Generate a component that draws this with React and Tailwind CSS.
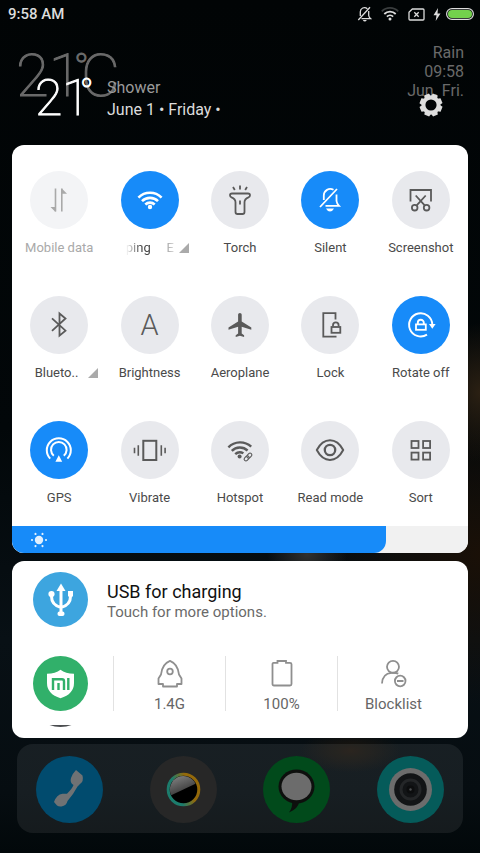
import { useState } from 'react'
import { clsx } from 'clsx'

const line = { fill: 'none', stroke: 'currentColor', strokeWidth: 2 }

const glyphs = {
  data: (
    <g>
      <path {...line} strokeWidth="1.6" d="M25.5 17.5v23M31.8 40.5v-23" />
      <path fill="currentColor" d="M20.5 36h5v5zM31.8 17.5l5.2 5.2h-5.2z" />
    </g>
  ),
  wifi: (
    <g>
      <path {...line} strokeWidth="2.6" d="M17.4 26.6a16.4 16.4 0 0 1 23.2 0M21 30.2a11.3 11.3 0 0 1 16 0M24.3 33.5a6.8 6.8 0 0 1 9.4 0" />
      <circle fill="currentColor" cx="29" cy="36" r="2.2" />
    </g>
  ),
  torch: (
    <g>
      <path {...line} strokeWidth="1.8" strokeLinejoin="round" d="M21 22.5h16q2 0 2 1.8q0 1.5-1.5 2q-4 1.5-4 5V41q0 2-2 2h-5q-2 0-2-2v-9.7q0-3.5-4-5q-1.5-.5-1.5-2q0-1.8 2-1.8z" />
      <path {...line} strokeWidth="1.8" d="M29 29.5v4M29 14.5v4M22 16l1.800 3M36 16l-1.800 3" />
    </g>
  ),
  silent: (
    <g>
      <path {...line} strokeWidth="1.8" d="M32.5 18.8a6.5 6.5 0 0 0-9.7 5.7v4.5M35.5 23.5v6.5q.3 2.5 2.5 4.8H24.5M19 36l17-18" />
      <path fill="currentColor" d="M25 37.6h8q-1.5 3-4 3t-4-3z" />
    </g>
  ),
  screenshot: (
    <g {...line} strokeWidth="1.8">
      <path d="M18.5 30.5V19H39v11.5M33.7 24.5l-9 9.8M23.7 24.5l9 9.8" />
      <circle cx="22.7" cy="36.7" r="2.8" />
      <circle cx="34.6" cy="36.7" r="2.8" />
    </g>
  ),
  bluetooth: <path {...line} strokeWidth="1.8" d="M22 22.3l13.5 12.4-6 5V17.5l6 5L22 34.9" />,
  plane: (
    <path
      fill="currentColor"
      transform="translate(15.1 14.6) scale(1.2)"
      d="M21 16v-2l-8-5V3.5C13 2.67 12.33 2 11.5 2S10 2.67 10 3.5V9l-8 5v2l8-2.5V19l-2 1.5V22l3.5-1 3.5 1v-1.5L13 19v-5.5z"
    />
  ),
  lock: (
    <g {...line} strokeWidth="1.8">
      <path d="M34.5 23.5v-6.3H22.3v23.5h13.2M32 30.5v-1.3a2.8 2.8 0 0 1 5.6 0v1.3" />
      <rect x="30.5" y="31" width="8.8" height="5.8" />
    </g>
  ),
  rotate: (
    <g>
      <path {...line} strokeWidth="1.9" d="M40.3 28.5A11.6 11.6 0 1 0 35 38.6M25.8 28v-1.3a3 3 0 0 1 6 0V28" />
      <rect {...line} strokeWidth="1.8" x="24" y="28.4" width="9.8" height="5.4" />
      <path fill="currentColor" d="M37 28h6.6l-3.3 4.8z" />
    </g>
  ),
  gps: (
    <g>
      <path {...line} d="M20.2 37.6a12 12 0 1 1 17.2 0M23.8 34.7a7.8 7.8 0 1 1 10 0" />
      <path fill="currentColor" d="M28.8 34.3l3.4 6.5h-6.8z" />
    </g>
  ),
  vibrate: (
    <g {...line}>
      <rect x="22.3" y="19.8" width="13" height="19.2" />
      <path strokeWidth="1.6" d="M17.3 24.3v10.4M13.5 26.8v5.4M40.3 24.3v10.4M44.1 26.8v5.4" />
    </g>
  ),
  hotspot: (
    <g {...line}>
      <path strokeWidth="2.4" d="M17.4 26.3a16.4 16.4 0 0 1 22.8-.6M20.8 29.9a11.3 11.3 0 0 1 15.8-.4M24.2 33.2a6.8 6.8 0 0 1 8.2-.9" />
      <circle fill="currentColor" stroke="none" cx="28.6" cy="35.6" r="2" />
      <g strokeWidth="1.1" transform="rotate(-45 37 36)">
        <rect x="32.3" y="34.2" width="5.6" height="3.6" rx="1.8" />
        <rect x="36.1" y="34.2" width="5.6" height="3.6" rx="1.8" />
      </g>
    </g>
  ),
  eye: (
    <g {...line}>
      <path strokeLinejoin="round" d="M15.8 29Q21 19.3 29 19.3T42.2 29Q37 38.9 29 38.9T15.8 29z" />
      <circle strokeWidth="2.3" cx="29" cy="29" r="5.2" />
    </g>
  ),
  sort: (
    <g {...line} strokeWidth="1.8">
      <rect x="19.5" y="20" width="7" height="7" />
      <rect x="31.1" y="20" width="7" height="7" />
      <rect x="19.5" y="31.6" width="7" height="7" />
      <rect x="31.1" y="31.6" width="7" height="7" />
    </g>
  ),
}

const initialTiles = [
  { id: 'data', label: 'Mobile data', disabled: true },
  { id: 'wifi', label: 'ping', next: 'E', on: true, expandable: true },
  { id: 'torch', label: 'Torch' },
  { id: 'silent', label: 'Silent', on: true },
  { id: 'screenshot', label: 'Screenshot' },
  { id: 'bluetooth', label: 'Blueto..', expandable: true },
  { id: 'brightness', label: 'Brightness' },
  { id: 'plane', label: 'Aeroplane' },
  { id: 'lock', label: 'Lock' },
  { id: 'rotate', label: 'Rotate off', on: true },
  { id: 'gps', label: 'GPS', on: true },
  { id: 'vibrate', label: 'Vibrate' },
  { id: 'hotspot', label: 'Hotspot' },
  { id: 'eye', label: 'Read mode' },
  { id: 'sort', label: 'Sort' },
]

function StatusBar() {
  return (
    <div className="flex h-7 items-center justify-between pr-[6px] pl-2 text-[#dcdcdc]">
      <span className="text-[15px] font-medium">9:58 AM</span>
      <div className="flex items-center">
        <svg className="mr-[9px] h-4 w-[15px]" viewBox="0 0 15 16" fill="none" stroke="currentColor" strokeWidth="1.3">
          <path d="M10.3 2.7A4.2 4.2 0 0 0 3.3 6v4M11.7 5v4.5q.3 1.8 2 3.2H4.5M1.3 14L13 1.3" />
          <path fill="currentColor" stroke="none" d="M5.8 14h4q-.8 1.5-2 1.5t-2-1.5z" />
        </svg>
        <svg className="mr-[9px] h-[14px] w-[18px]" viewBox="0 0 18 14" fill="none" stroke="currentColor" strokeWidth="1.8">
          <path stroke="#3a3d3e" d="M.8 4.3a11.6 11.6 0 0 1 16.4 0" />
          <path d="M3.3 7a8 8 0 0 1 11.4 0M5.9 9.6a4.4 4.4 0 0 1 6.2 0" />
          <circle cx="9" cy="12" r="1.5" fill="currentColor" stroke="none" />
        </svg>
        <svg className="mr-2 h-[13px] w-[17px]" viewBox="0 0 17 13" fill="none" stroke="currentColor" strokeWidth="1.3">
          <path strokeLinejoin="round" d="M4.3 1H15q1 0 1 1v9q0 1-1 1H2q-1 0-1-1V4.3z" />
          <path d="M6.3 4.3l4.4 4.4M10.7 4.3L6.3 8.7" />
        </svg>
        <svg className="mr-[5px] h-[13px] w-2" viewBox="0 0 8 13" fill="currentColor">
          <path d="M5 0L.5 7.3h3L2.7 13 7.5 5.5h-3z" />
        </svg>
        <svg className="h-3 w-7" viewBox="0 0 28 12">
          <rect x=".6" y=".6" width="26.8" height="10.8" rx="5.4" fill="none" stroke="currentColor" strokeWidth="1.2" />
          <rect x="2" y="2" width="24" height="8" rx="4" fill="#73d14c" />
        </svg>
      </div>
    </div>
  )
}

function GearIcon() {
  return (
    <svg className="h-6 w-6" viewBox="-12 -12 24 24">
      <circle r="7.5" fill="none" stroke="#dedede" strokeWidth="3.8" />
      {[22, 67, 112, 157, 202, 247, 292, 337].map((angle) => (
        <path key={angle} fill="#dedede" transform={`rotate(${angle})`} d="M-3.4-8l.8-3.4h5.2l.8 3.4z" />
      ))}
    </svg>
  )
}

function WeatherHeader() {
  return (
    <header className="relative flex h-[117px] items-end pb-6 pl-[35px] text-base leading-[22px]">
      <div className="absolute inset-x-4 top-[15px] flex justify-between text-[#6a6a6a]">
        <p className="flex items-start text-[60px] leading-[66px] font-thin [-webkit-text-stroke:1px]">
          <span>21</span>
          <span className="-ml-2 text-[40px] leading-[52px]">°</span>
          <span className="-ml-2">C</span>
        </p>
        <p className="text-right leading-[19px]">
          Rain
          <br />
          09:58
          <br />
          Jun. Fri.
        </p>
      </div>
      <p className="relative flex w-[72px] items-start text-[50px] leading-[46px] font-thin text-white [-webkit-text-stroke:1px]">
        <span>21</span>
        <span className="-ml-[10px] text-4xl leading-9">°</span>
      </p>
      <div className="relative">
        <p className="text-[#9a9a9a]">Shower</p>
        <p className="text-[#dcdcdc]">June 1 • Friday •</p>
      </div>
      <button type="button" aria-label="Settings" className="relative mr-[37px] mb-1 ml-auto">
        <GearIcon />
      </button>
    </header>
  )
}

function ExpandMark() {
  return (
    <svg className="h-[10px] w-[10px] text-[#aaa]" viewBox="0 0 10 10">
      <path fill="currentColor" d="M10 0v10H0z" />
    </svg>
  )
}

function Tile({ tile, onToggle }) {
  return (
    <button
      type="button"
      aria-pressed={Boolean(tile.on)}
      disabled={tile.disabled}
      onClick={() => onToggle(tile.id)}
      className="flex flex-col items-center gap-[9px]"
    >
      <span
        className={clsx(
          'flex h-[58px] w-[58px] items-center justify-center rounded-full',
          tile.on && 'bg-[#178bf9] text-white',
          tile.disabled && 'bg-[#f3f4f6] text-[#a9a9a9]',
          !tile.on && !tile.disabled && 'bg-[#e8e9ed] text-[#5a5a5a]',
        )}
      >
        {tile.id === 'brightness' ? (
          <span aria-hidden="true" className="text-[29px] leading-none font-light">A</span>
        ) : (
          <svg className="h-[58px] w-[58px]" viewBox="0 0 58 58">{glyphs[tile.id]}</svg>
        )}
      </span>
      <span
        className={clsx(
          'flex w-full items-center text-[13px] leading-5 whitespace-nowrap',
          tile.expandable ? 'justify-end pr-[6px]' : 'justify-center',
          tile.next ? 'gap-[5px]' : 'gap-[10px]',
          tile.disabled ? 'text-[#a9a9a9]' : 'text-[#4a4a4a]',
        )}
      >
        {tile.next ? (
          <span className="flex w-12 justify-between overflow-hidden [mask-image:linear-gradient(to_right,transparent,black_30%,black_60%,transparent_110%)]">
            <span>{tile.label}</span>
            <span>{tile.next}</span>
          </span>
        ) : (
          tile.label
        )}
        {tile.expandable ? <ExpandMark /> : null}
      </span>
    </button>
  )
}

function BrightnessSlider() {
  const [level, setLevel] = useState(82)

  return (
    <div className="relative h-[27px] bg-[#f1f1f1]">
      <div className="flex h-full items-center rounded-br-xl bg-[#178bf9] pl-[18px]" style={{ width: `${level}%` }}>
        <svg className="h-[18px] w-[18px]" viewBox="-9 -9 18 18" fill="#e3f0fd">
          <circle r="4.2" />
          {[0, 60, 120, 180, 240, 300].map((angle) => (
            <circle key={angle} r="1.1" cx="7" transform={`rotate(${angle})`} />
          ))}
        </svg>
      </div>
      <input
        type="range"
        aria-label="Screen brightness"
        value={level}
        onChange={(event) => setLevel(Number(event.target.value))}
        className="absolute inset-0 h-full w-full opacity-0"
      />
    </div>
  )
}

function QuickSettings() {
  const [tiles, setTiles] = useState(initialTiles)

  function handleToggle(id) {
    setTiles(tiles.map((tile) => (tile.id === id ? { ...tile, on: !tile.on } : tile)))
  }

  return (
    <section className="mx-3 overflow-hidden rounded-xl bg-white">
      <div className="grid grid-cols-5 gap-y-[38px] px-[2px] pt-[26px] pb-[18px]">
        {tiles.map((tile) => (
          <Tile key={tile.id} tile={tile} onToggle={handleToggle} />
        ))}
      </div>
      <BrightnessSlider />
    </section>
  )
}

const shortcuts = [
  {
    label: '1.4G',
    icon: (
      <>
        <path d="M6 15.5Q7 5 15 1.8Q23 5 24 15.5l2.5 4V25H22v2.5H8V25H3.5v-5.5z" strokeLinejoin="round" />
        <circle cx="15" cy="12.5" r="2.8" />
      </>
    ),
  },
  {
    label: '100%',
    icon: <path d="M6.5 3.8h4V2h8.5v1.8h4q1.500 0 1.500 1.500V25q0 1.500-1.500 1.500h-16Q5.500 26.500 5.500 25V5.300q0-1.500 1-1.500z" />,
  },
  {
    label: 'Blocklist',
    icon: (
      <>
        <circle cx="14" cy="7.8" r="6" />
        <path d="M3 24.5q.5-10 9.5-10.7q4-.3 6.8.8M18 22h6.5" />
        <circle cx="21.2" cy="22" r="5.3" />
      </>
    ),
  },
]

function Notifications() {
  return (
    <section className="mx-3 mt-2 flex flex-col rounded-xl bg-white pt-[11px] pr-[19px] pb-[11px] pl-[21px]">
      <a href="#usb" className="flex items-center">
        <svg className="h-[55px] w-[55px]" viewBox="0 0 55 55">
          <circle cx="27.5" cy="27.5" r="27.5" fill="#3da5df" />
          <path fill="none" stroke="#fff" strokeWidth="3" d="M28 17v25M18.5 22v2.5q0 8.5 9.5 11Q37.5 33 37.5 24.5V22" />
          <g fill="#fff">
            <path d="M28 11.5l4.5 7.5h-9z" />
            <rect x="35" y="19" width="5" height="5.5" />
            <circle cx="18.5" cy="22" r="3.1" />
            <rect x="24.5" y="39.5" width="7" height="4.5" rx="2" />
          </g>
        </svg>
        <div className="ml-[19px] pt-1">
          <p className="text-lg leading-5 text-[#111]">USB for charging</p>
          <p className="text-[15px] leading-5 text-[#6a6a6a]">Touch for more options.</p>
        </div>
      </a>
      <div className="mt-[29px] flex">
        <svg className="h-[55px] w-[55px]" viewBox="0 0 55 55">
          <circle cx="27.5" cy="27.5" r="27.5" fill="#31b06a" />
          <path fill="#fff" d="M27.5 13.7q5 3.8 13.5 4V27q0 11-13.5 15.3Q14 38 14 27v-9.3q8.5-.2 13.5-4z" />
          <path fill="none" stroke="#31b06a" strokeWidth="2.4" d="M20 34V23.2h9q2 0 2 2V34M25.500 27v7M35.300 22v12" />
        </svg>
        <div className="ml-[25px] grid flex-1 grid-cols-3">
          {shortcuts.map((item) => (
            <button
              key={item.label}
              type="button"
              className="flex h-[55px] flex-col items-center border-l border-[#e2e2e2] pt-[3px] text-[15px] leading-5 text-[#666]"
            >
              <svg className="mb-[6px] h-[29px] w-[30px] shrink-0" viewBox="0 0 30 29" fill="none" stroke="#8f8f8f" strokeWidth="1.8">
                {item.icon}
              </svg>
              {item.label}
            </button>
          ))}
        </div>
      </div>
      <svg className="mt-[14px] h-[2px] w-[55px]" viewBox="0 0 55 2">
        <path fill="#4b4d50" d="M16.5 0h22q-5 2-11 2t-11-2z" />
      </svg>
    </section>
  )
}

const apps = [
  {
    label: 'Phone',
    color: '#014b6e',
    art: (
      <path
        fill="#6f7274"
        d="M40 14l6.5 5.5q1.5 6-2.5 8.5l-2.5 2.5Q37 39 31.500 45q-1 4.500-6 5.500-3 .3-4.500-1L18 46q2.500-7.500 8.500-8.300h4.500Q36 33 37.500 29q-4-2.500-2.500-7Q36.500 17.500 40 14z"
      />
    ),
  },
  {
    label: 'Gallery',
    color: '#272727',
    art: (
      <>
        <defs>
          <linearGradient id="ring" x1="0" y1=".7" x2="1" y2=".3">
            <stop offset=".3" stopColor="#1c7c6c" />
            <stop offset=".7" stopColor="#94690a" />
          </linearGradient>
          <linearGradient id="glass" x1="0" y1="0" x2=".5" y2="1">
            <stop offset="0" stopColor="#888" />
            <stop offset="1" stopColor="#333" />
          </linearGradient>
        </defs>
        <circle cx="33.5" cy="33.5" r="15.3" fill="#000" stroke="url(#ring)" strokeWidth="3" />
        <path fill="url(#glass)" d="M21.2 39.3A13.3 13.3 0 0 1 45.5 27.7z" />
      </>
    ),
  },
  {
    label: 'Messages',
    color: '#014a1b',
    art: (
      <>
        <ellipse cx="33.5" cy="30.5" rx="18" ry="17" fill="#0d0f0d" />
        <path fill="#0d0f0d" d="M29 45q1 6-3 11.5Q35 53 36.5 45z" />
        <ellipse cx="33.5" cy="30.5" rx="15" ry="13.8" fill="#6c6c6c" />
      </>
    ),
  },
  {
    label: 'Camera',
    color: '#055b5a',
    art: (
      <>
        <circle cx="33.5" cy="33.5" r="21.5" fill="#6c6c6c" />
        <circle cx="33.5" cy="33.5" r="16.3" fill="#121416" />
        <circle cx="33.5" cy="33.5" r="9.5" fill="none" stroke="#242628" strokeWidth="3" />
        <circle cx="33.5" cy="33.5" r="4" fill="#0c0d0e" />
        <circle cx="33.5" cy="33.5" r="1.2" fill="#4b4d4f" />
      </>
    ),
  },
]

function Dock() {
  return (
    <nav className="mx-[17px] mt-[6px] mb-5 flex justify-between rounded-2xl bg-white/7 px-[19px] pt-3 pb-[10px]">
      {apps.map((app) => (
        <button key={app.label} type="button" aria-label={app.label}>
          <svg className="h-[67px] w-[67px]" viewBox="0 0 67 67">
            <circle cx="33.5" cy="33.5" r="33.5" fill={app.color} />
            {app.art}
          </svg>
        </button>
      ))}
    </nav>
  )
}

export default function App() {
  return (
    <main className="flex min-h-screen flex-col bg-[#020709] bg-[radial-gradient(50px_22px_at_73%_88%,#1b150e,transparent),radial-gradient(40px_30px_at_64%_65%,#30302f,transparent),radial-gradient(50px_70px_at_100%_46%,#2b2013,transparent),radial-gradient(160px_150px_at_100%_65%,#1a1007,transparent),linear-gradient(#010405,#020709_50%,#081015_75%,#060d11_93%,#02080a)] font-[Roboto,sans-serif]">
      <StatusBar />
      <WeatherHeader />
      <QuickSettings />
      <Notifications />
      <Dock />
    </main>
  )
}
